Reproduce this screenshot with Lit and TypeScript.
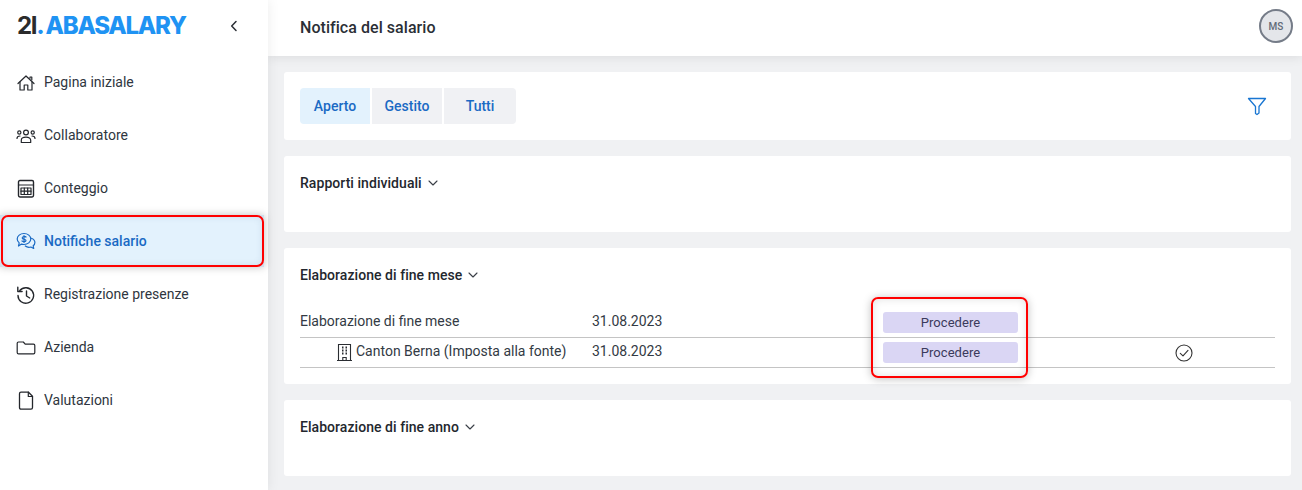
import { LitElement, html, css, svg } from "lit";
import { customElement } from "lit/decorators.js";

const ic = (body: unknown) =>
  html`<svg width="20" height="20" viewBox="0 0 20 20" fill="none" stroke="currentColor" stroke-width="1.2" stroke-linecap="round" stroke-linejoin="round">${body}</svg>`;

const icons = {
  home: svg`<path d="M2 10.500 10 3l8 7.500"/><path d="M4 9v8h4.200v-5h3.600v5H16V9"/><path d="M14 5.200V4h1.800v3"/>`,
  people: svg`<circle cx="10" cy="6.500" r="2.400"/><circle cx="3.300" cy="6.500" r="1.600"/><circle cx="16.700" cy="6.500" r="1.600"/><path d="M5.300 16.500v-2.300c0-2 1.800-3 4.700-3s4.700 1 4.700 3v2.300z"/><path d="M1 12.500c0-1.500 1-2.500 3-2.500M19 12.500c0-1.500-1-2.500-3-2.500"/>`,
  calc: svg`<rect x="2.500" y="1.500" width="15" height="16.500" rx="1.400" stroke-width="1.400"/><path d="M2.500 6h15"/><rect x="5" y="9" width="10" height="6.500"/><path d="M5 12.200h10M8.300 9v6.500M11.700 9v6.500" /> `,
  chat: svg`<path d="M8 1.500c3.800 0 6.800 2.500 6.800 5.500s-3 5.500-6.800 5.500c-.9 0-1.700-.1-2.500-.4L2.500 14l.7-3.100C1.900 9.800 1.200 8.500 1.200 7 1.200 4 4.200 1.500 8 1.500z"/><path d="M15.200 6.200c2.200.7 3.700 2.300 3.700 4.300 0 1.300-.7 2.500-1.700 3.300l.5 2.700-2.800-1.500c-2.100.6-4.200.1-5.600-1"/><path d="M8 3.500v7M10 5c-.7-.8-3.800-.9-3.800.9 0 1.800 3.800 1 3.800 2.600 0 1.500-3 1.400-4 .5"/>`,
  history: svg`<path d="M3.800 5.500A7.800 7.800 0 1 1 2 10.500" stroke-width="1.400"/><path d="M1.800 2.200v4.300h4.300" stroke-width="1.400"/><path d="M10.500 6v5l3.200 2" stroke-width="1.400"/>`,
  folder: svg`<path d="M1.200 14.500V5.300c0-.8.500-1.300 1.300-1.300h4.800l1.900 2.200h8.300c.8 0 1.300.5 1.300 1.300v7c0 .8-.5 1.300-1.300 1.300H2.500c-.8 0-1.300-.5-1.300-1.300z"/>`,
  doc: svg`<path d="M3.500 2.800c0-1 .6-1.600 1.500-1.600h7.500l4 4v11.300c0 1-.6 1.700-1.500 1.700H5c-.9 0-1.500-.7-1.500-1.700z" stroke-width="1.300"/><path d="M12.300 1.200v4.300h4.200"/>`,
};

const nav = [
  ["Pagina iniziale", icons.home],
  ["Collaboratore", icons.people],
  ["Conteggio", icons.calc],
  ["Notifiche salario", icons.chat],
  ["Registrazione presenze", icons.history],
  ["Azienda", icons.folder],
  ["Valutazioni", icons.doc],
] as const;

const chevron = html`<svg class="chev" width="10" height="6" viewBox="0 0 10 6" fill="none" stroke="currentColor" stroke-width="1.1" stroke-linecap="round" stroke-linejoin="round"><path d="M1 1l4 4 4-4"/></svg>`;

@customElement("app-root")
export class AppRoot extends LitElement {
  static styles = css`
    :host {
      display: block;
      width: 1302px;
      height: 490px;
      overflow: hidden;
      font-family: Roboto, "Liberation Sans", sans-serif;
      font-size: 14px;
      color: #2b2f36;
    }
    .app {
      display: flex;
      height: 490px;
      background: #f0f1f3;
    }
    .side {
      width: 268px;
      flex: none;
      background: #fff;
      box-shadow: 0 0 12px rgba(0, 0, 0, 0.08);
      z-index: 2;
      position: relative;
    }
    .brand {
      height: 56px;
      display: flex;
      align-items: flex-start;
      padding: 13px 0 0 17px;
      box-sizing: border-box;
    }
    .logo {
      font-family: Inter, sans-serif;
      font-weight: 800;
      font-size: 24px;
      line-height: 26px;
      letter-spacing: -1.25px;
      width: 213px;
      color: #1f93f3;
    }
    .logo b {
      color: #2b2b2b;
      font-weight: 700;
    }
    .logo i {
      font-style: normal;
      margin-right: 2px;
    }
    .collapse {
      color: #2b2f36;
      display: block;
      margin-top: 7px;
    }
    .nav {
      display: flex;
      flex-direction: column;
      gap: 1px;
    }
    .item {
      height: 52px;
      display: flex;
      align-items: center;
      gap: 8px;
      padding-left: 16px;
      color: #2f3640;
      position: relative;
    }
    .item svg {
      flex: none;
      margin-top: 2px;
      color: #24272c;
    }
    .item .lbl {
      margin-top: -1px;
    }
    .item.active {
      background: #e3f2fd;
      color: #1a6ac4;
      font-weight: 500;
      margin: 0 4px 0 0;
      box-shadow: 0 0 8px rgba(0, 0, 0, 0.25), inset 0 0 8px rgba(40, 70, 110, 0.18);
    }
    .item.active svg {
      color: #1a6ac4;
    }
    .ring {
      position: absolute;
      border: 2px solid #f00;
      border-radius: 7px;
      box-sizing: border-box;
      pointer-events: none;
    }
    .item .ring {
      inset: 0 0 0 1px;
    }
    .main {
      flex: 1;
      min-width: 0;
      display: flex;
      flex-direction: column;
    }
    .top {
      height: 56px;
      flex: none;
      background: #fff;
      box-shadow: 0 2px 10px rgba(0, 0, 0, 0.08);
      display: flex;
      align-items: center;
      justify-content: space-between;
      padding: 0 9px 0 32px;
      z-index: 1;
    }
    .title {
      font-weight: 500;
      font-size: 16px;
      letter-spacing: 0.05px;
      color: #2b2f36;
      margin-top: -2px;
    }
    .avatar {
      width: 34px;
      height: 34px;
      box-sizing: border-box;
      border: 2px solid #757c88;
      border-radius: 50%;
      background: #e4e6ea;
      color: #616a78;
      font-size: 10px;
      font-weight: 500;
      display: flex;
      align-items: center;
      justify-content: center;
      margin-top: -4px;
    }
    .content {
      display: flex;
      flex-direction: column;
      gap: 16px;
      padding: 16px 11px 0 16px;
    }
    .card {
      background: #fff;
      border-radius: 3px;
      padding: 0 16px;
    }
    .tabs-card {
      height: 68px;
      display: flex;
      align-items: center;
      justify-content: space-between;
    }
    .tabs {
      display: flex;
      gap: 2px;
    }
    .tab {
      height: 36px;
      display: flex;
      align-items: center;
      justify-content: center;
      background: #f0f1f4;
      color: #1a6ac4;
      font-weight: 500;
    }
    .tab:first-child {
      width: 70px;
      background: #e3f2fd;
      border-radius: 4px 0 0 4px;
    }
    .tab:nth-child(2) {
      width: 70px;
    }
    .tab:nth-child(3) {
      width: 72px;
      border-radius: 0 4px 4px 0;
    }
    .filter {
      color: #1976d2;
      display: block;
      margin-right: 8px;
    }
    .sec {
      height: 76px;
      padding-top: 18px;
      box-sizing: border-box;
    }
    .sec.open {
      height: 136px;
    }
    .sec-h {
      display: flex;
      align-items: center;
      gap: 6px;
      font-weight: 500;
      letter-spacing: 0.05px;
      color: #23272e;
      height: 17px;
    }
    .chev {
      color: #3a3f47;
      margin-top: 1px;
    }
    .rows {
      margin-top: 25px;
      position: relative;
    }
    .row {
      height: 30px;
      display: grid;
      grid-template-columns: 292px 291px 135px 1fr;
      align-items: center;
      color: #333a44;
      box-sizing: border-box;
      border-bottom: 1px solid #c4c4c4;
    }
    .row.child .name {
      padding-left: 36px;
    }
    .name {
      display: flex;
      align-items: center;
      gap: 3px;
      margin-top: -4px;
    }
    .date {
      margin-top: -4px;
    }
    .bld {
      display: block;
      color: #2a2d32;
      margin-top: 3px;
    }
    .btn {
      height: 21px;
      border-radius: 3px;
      background: #dad6f4;
      color: #3b3a5c;
      font-size: 13px;
      display: flex;
      align-items: center;
      justify-content: center;
      letter-spacing: 0.05px;
    }
    .check {
      justify-self: start;
      margin-left: 157px;
      color: #333;
      display: block;
      margin-top: 1px;
    }
    .rows .ring {
      left: 571px;
      top: -11px;
      width: 157px;
      height: 81px;
      box-shadow: 0 1px 8px rgba(0, 0, 0, 0.25), inset 0 0 8px rgba(0, 0, 0, 0.12);
    }
  `;

  render() {
    return html`<div class="app">
      <aside class="side">
        <div class="brand">
          <div class="logo"><b>2I</b><i>.</i>ABASALARY</div>
          <svg class="collapse" width="8" height="12" viewBox="0 0 8 12" fill="none" stroke="currentColor" stroke-width="1.500" stroke-linecap="round" stroke-linejoin="round"><path d="M6 1.500 1.700 6 6 10.500"/></svg>
        </div>
        <nav class="nav">
          ${nav.map(([label, icon], i) => html`<div class="item ${i === 3 ? "active" : ""}">
            ${ic(icon)}<span class="lbl">${label}</span>
            ${i === 3 ? html`<span class="ring"></span>` : ""}
          </div>`)}
        </nav>
      </aside>
      <div class="main">
        <header class="top">
          <div class="title">Notifica del salario</div>
          <div class="avatar">MS</div>
        </header>
        <div class="content">
          <section class="card tabs-card">
            <div class="tabs">
              <div class="tab">Aperto</div>
              <div class="tab">Gestito</div>
              <div class="tab">Tutti</div>
            </div>
            <svg class="filter" width="20" height="20" viewBox="0 0 20 20" fill="none" stroke="currentColor" stroke-width="1.300" stroke-linejoin="round"><path d="M1.500 2.500h17L12 10.500V17l-2 1.500-1.500-1V10.500z"/></svg>
          </section>
          <section class="card sec">
            <div class="sec-h">Rapporti individuali ${chevron}</div>
          </section>
          <section class="card sec open">
            <div class="sec-h">Elaborazione di fine mese ${chevron}</div>
            <div class="rows">
              <div class="row">
                <div class="name">Elaborazione di fine mese</div>
                <div class="date">31.08.2023</div>
                <div class="btn">Procedere</div>
              </div>
              <div class="row child">
                <div class="name">
                  <svg class="bld" width="17" height="18" viewBox="0 0 17 18" fill="none" stroke="currentColor" stroke-width="1.100"><path d="M1 17.500h15M2.500 17.500V1.500h12v16"/><path d="M6.800 17.500v-3h3.400v3"/><path d="M6 4.500h1.500M9.500 4.500H11M6 7.500h1.500M9.500 7.500H11M6 10.500h1.500M9.500 10.500H11" stroke-width="1.800"/></svg>
                  Canton Berna (Imposta alla fonte)
                </div>
                <div class="date">31.08.2023</div>
                <div class="btn">Procedere</div>
                <svg class="check" width="18" height="18" viewBox="0 0 18 18" fill="none" stroke="currentColor" stroke-width="1.100" stroke-linecap="round" stroke-linejoin="round"><circle cx="9" cy="9" r="8"/><path d="M5.300 9.300 8 11.800 13 6.300"/></svg>
              </div>
              <span class="ring"></span>
            </div>
          </section>
          <section class="card sec">
            <div class="sec-h">Elaborazione di fine anno ${chevron}</div>
          </section>
        </div>
      </div>
    </div>`;
  }
}
